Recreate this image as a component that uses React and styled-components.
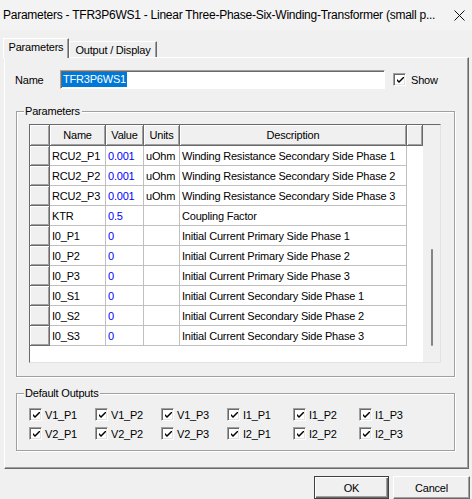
import React from 'react'
import styled, { createGlobalStyle } from 'styled-components'

const GlobalStyle = createGlobalStyle`
  html, body {
    margin: 0;
    padding: 0;
    background: #f0f0f0;
  }
  body {
    font-family: "Liberation Sans", Arial, sans-serif;
    font-size: 11px;
    letter-spacing: -0.2px;
    color: #000;
  }
`

const rows = [
  { name: 'RCU2_P1', value: '0.001', units: 'uOhm', desc: 'Winding Resistance Secondary Side Phase 1' },
  { name: 'RCU2_P2', value: '0.001', units: 'uOhm', desc: 'Winding Resistance Secondary Side Phase 2' },
  { name: 'RCU2_P3', value: '0.001', units: 'uOhm', desc: 'Winding Resistance Secondary Side Phase 3' },
  { name: 'KTR', value: '0.5', units: '', desc: 'Coupling Factor' },
  { name: 'I0_P1', value: '0', units: '', desc: 'Initial Current Primary Side Phase 1' },
  { name: 'I0_P2', value: '0', units: '', desc: 'Initial Current Primary Side Phase 2' },
  { name: 'I0_P3', value: '0', units: '', desc: 'Initial Current Primary Side Phase 3' },
  { name: 'I0_S1', value: '0', units: '', desc: 'Initial Current Secondary Side Phase 1' },
  { name: 'I0_S2', value: '0', units: '', desc: 'Initial Current Secondary Side Phase 2' },
  { name: 'I0_S3', value: '0', units: '', desc: 'Initial Current Secondary Side Phase 3' },
]

const outputs = [
  'V1_P1', 'V1_P2', 'V1_P3', 'I1_P1', 'I1_P2', 'I1_P3',
  'V2_P1', 'V2_P2', 'V2_P3', 'I2_P1', 'I2_P2', 'I2_P3',
]

const Check = () => (
  <Box>
    <svg width="7" height="7" viewBox="0 0 7 7">
      <path d="M0 2 L0 4 L2 6 L7 1 L7 -1 L2 4 Z" fill="#000" />
    </svg>
  </Box>
)

const App = () => {
  return (
    <>
      <GlobalStyle />
      <Window>
        <TitleBar>
          <Title>Parameters - TFR3P6WS1 - Linear Three-Phase-Six-Winding-Transformer (small p...</Title>
          <Close>
            <svg width="11" height="11" viewBox="0 0 11 11">
              <path d="M0.5 0.5 L10.5 10.5 M10.5 0.5 L0.5 10.5" stroke="#111" strokeWidth="1" />
            </svg>
          </Close>
        </TitleBar>

        <TabStrip>
          <Tab $active>Parameters</Tab>
          <Tab>Output / Display</Tab>
        </TabStrip>

        <Panel>
          <NameRow>
            <NameLabel>Name</NameLabel>
            <NameInput>
              <Selected>TFR3P6WS1</Selected>
            </NameInput>
            <ShowWrap>
              <Check />
              <span>Show</span>
            </ShowWrap>
          </NameRow>

          <Group $top={22} $height={266}>
            <Legend>Parameters</Legend>
            <Grid>
              <Table>
                <HeadCell />
                <HeadCell>Name</HeadCell>
                <HeadCell>Value</HeadCell>
                <HeadCell>Units</HeadCell>
                <HeadCell>Description</HeadCell>
                <HeadCell />
                {rows.map((r) => (
                  <React.Fragment key={r.name}>
                    <HeadCell />
                    <Cell>{r.name}</Cell>
                    <Cell $blue>{r.value}</Cell>
                    <Cell>{r.units}</Cell>
                    <Cell>{r.desc}</Cell>
                    <Blank />
                  </React.Fragment>
                ))}
              </Table>
              <ScrollTrack>
                <Thumb />
              </ScrollTrack>
            </Grid>
          </Group>

          <Group $top={16} $height={58}>
            <Legend>Default Outputs</Legend>
            <CheckGrid>
              {outputs.map((o) => (
                <CheckItem key={o}>
                  <Check />
                  <span>{o}</span>
                </CheckItem>
              ))}
            </CheckGrid>
          </Group>
        </Panel>

        <ButtonRow>
          <Button $default>OK</Button>
          <Button>Cancel</Button>
        </ButtonRow>
      </Window>
    </>
  )
}

export default App

const Window = styled.div`
  width: 472px;
  height: 499px;
  overflow: hidden;
  background: #f0f0f0;
  display: flex;
  flex-direction: column;
`
const TitleBar = styled.div`
  height: 30px;
  flex-shrink: 0;
  display: flex;
  align-items: center;
  justify-content: space-between;
  background: #f3f3f3;
  padding-left: 3px;
  padding-right: 7px;
`
const Title = styled.div`
  font-size: 12px;
  letter-spacing: -0.25px;
  white-space: nowrap;
  color: #000;
`
const Close = styled.div`
  display: flex;
  align-items: center;
`
const TabStrip = styled.div`
  display: flex;
  align-items: flex-end;
  height: 19px;
  margin-top: 8px;
  padding-left: 3px;
  position: relative;
  z-index: 1;
`
const Tab = styled.div`
  box-sizing: border-box;
  width: ${(p) => (p.$active ? '66px' : '88px')};
  height: ${(p) => (p.$active ? '20px' : '16px')};
  margin-bottom: ${(p) => (p.$active ? '-1px' : '0')};
  background: #f0f0f0;
  border-top: 1px solid #fff;
  border-left: 1px solid #fff;
  border-right: 1px solid #696969;
  box-shadow: inset -1px 0 0 #a0a0a0;
  display: flex;
  align-items: center;
  justify-content: center;
  padding-bottom: ${(p) => (p.$active ? '3px' : '0')};
  white-space: nowrap;
`
const Panel = styled.div`
  box-sizing: border-box;
  margin-left: 4px;
  width: 465px;
  height: 412px;
  flex-shrink: 0;
  border-top: 1px solid #fff;
  border-left: 1px solid #fff;
  border-right: 1px solid #696969;
  border-bottom: 1px solid #696969;
  box-shadow: inset -1px -1px 0 #a0a0a0;
  display: flex;
  flex-direction: column;
`
const NameRow = styled.div`
  display: flex;
  align-items: center;
  height: 19px;
  margin-top: 12px;
  padding-left: 10px;
`
const NameLabel = styled.div`
  width: 45px;
`
const NameInput = styled.div`
  box-sizing: border-box;
  width: 325px;
  height: 19px;
  background: #fff;
  border: 1px solid;
  border-color: #a0a0a0 #fff #fff #a0a0a0;
  box-shadow: inset 1px 1px 0 #696969;
  display: flex;
  align-items: center;
  padding-left: 1px;
`
const Selected = styled.span`
  background: #0078d7;
  color: #fff;
  padding: 0 1px;
  line-height: 15px;
`
const ShowWrap = styled.div`
  display: flex;
  align-items: center;
  gap: 5px;
  margin-left: 8px;
`
const Box = styled.div`
  box-sizing: border-box;
  width: 13px;
  height: 13px;
  flex-shrink: 0;
  background: #fff;
  border: 1px solid;
  border-color: #a0a0a0 #fff #fff #a0a0a0;
  box-shadow: inset 1px 1px 0 #696969, inset -1px -1px 0 #e3e3e3;
  display: flex;
  align-items: center;
  justify-content: center;
  padding: 1px 0 0 1px;
`
const Group = styled.div`
  position: relative;
  box-sizing: border-box;
  margin: ${(p) => p.$top}px 0 0 11px;
  width: 439px;
  height: ${(p) => p.$height}px;
  border: 1px solid #a0a0a0;
  box-shadow: inset 1px 1px 0 #fff, 1px 1px 0 #fff;
  padding: 12px 0 0 12px;
`
const Legend = styled.div`
  position: absolute;
  top: -7px;
  left: 7px;
  background: #f0f0f0;
  padding: 0 2px 0 1px;
  line-height: 13px;
`
const Grid = styled.div`
  box-sizing: border-box;
  display: flex;
  width: 412px;
  height: 239px;
  background: #fff;
  border: 1px solid;
  border-color: #696969 #e3e3e3 #e3e3e3 #696969;
`
const Table = styled.div`
  width: 393px;
  display: grid;
  grid-template-columns: 20px 56px 38px 36px 227px 16px;
  grid-template-rows: 21px;
  grid-auto-rows: 20px;
  align-content: start;
`
const HeadCell = styled.div`
  box-sizing: border-box;
  background: #f0f0f0;
  border-right: 1px solid #696969;
  border-bottom: 1px solid #696969;
  box-shadow: inset 1px 1px 0 #fff, inset -1px -1px 0 #a0a0a0;
  display: flex;
  align-items: center;
  justify-content: center;
  white-space: nowrap;
`
const Cell = styled.div`
  box-sizing: border-box;
  border-right: 1px solid #c0c0c0;
  border-bottom: 1px solid #c0c0c0;
  padding-left: 2px;
  display: flex;
  align-items: center;
  white-space: nowrap;
  overflow: hidden;
  color: ${(p) => (p.$blue ? '#0000ff' : '#000')};
`
const Blank = styled.div``
const ScrollTrack = styled.div`
  box-sizing: border-box;
  width: 17px;
  background: #f0f0f0;
  padding-top: 124px;
  display: flex;
  justify-content: center;
`
const Thumb = styled.div`
  width: 2px;
  height: 97px;
  background: #858585;
  border-radius: 1px;
`
const CheckGrid = styled.div`
  display: grid;
  grid-template-columns: repeat(6, 66px);
  grid-auto-rows: 19px;
  margin-top: -1px;
`
const CheckItem = styled.div`
  display: flex;
  align-items: center;
  gap: 3px;
`
const ButtonRow = styled.div`
  display: flex;
  justify-content: flex-end;
  gap: 4px;
  margin-top: 7px;
  padding-right: 2px;
`
const Button = styled.div`
  box-sizing: border-box;
  width: ${(p) => (p.$default ? '75px' : '77px')};
  height: 23px;
  background: #f0f0f0;
  border: 1px solid ${(p) => (p.$default ? '#404040' : '#fff')};
  border-right-color: ${(p) => (p.$default ? '#404040' : '#696969')};
  border-bottom-color: ${(p) => (p.$default ? '#404040' : '#696969')};
  box-shadow: ${(p) =>
    p.$default
      ? 'inset 1px 1px 0 #fff, inset -1px -1px 0 #696969, inset -2px -2px 0 #a0a0a0'
      : 'inset -1px -1px 0 #a0a0a0'};
  display: flex;
  align-items: center;
  justify-content: center;
  font-size: 11px;
`
